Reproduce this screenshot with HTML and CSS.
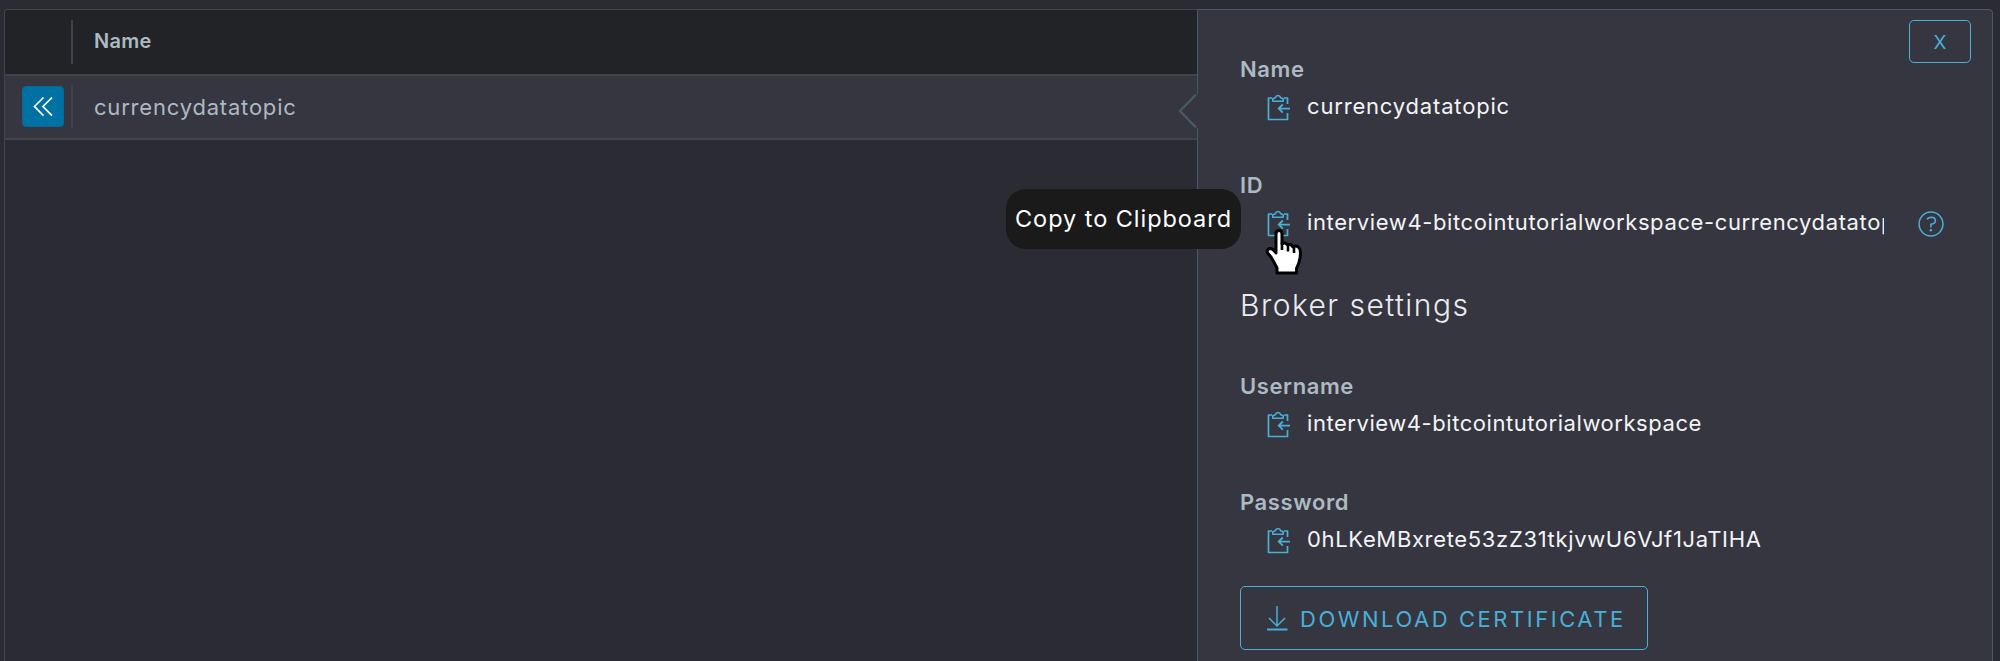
FILE: index.html
```html
<!DOCTYPE html>
<html lang="en">
<head>
<meta charset="utf-8">
<title>Topics</title>
<link rel="stylesheet" href="styles.css">
</head>
<body>
<svg class="defs" width="0" height="0">
  <symbol id="clip" viewBox="0 0 24 28">
    <path d="M5 4H1.500V25.500H20.500V19M20.500 10V4H17" fill="none" stroke="currentColor" stroke-width="1.700" stroke-linejoin="round"/>
    <path d="M5.800 7.200V4.800L8.300 3.800Q9 1.500 11 1.500T13.700 3.800L16.200 4.800V7.200Z" fill="none" stroke="currentColor" stroke-width="1.600" stroke-linejoin="round"/>
    <path d="M23 14.600H12M15.800 10.500L11.700 14.600L15.800 18.700" fill="none" stroke="currentColor" stroke-width="1.800"/>
  </symbol>
</svg>
<div class="datagrid">
  <section class="table">
    <div class="row head">
      <div class="cell action"></div>
      <div class="cell title">Name</div>
    </div>
    <div class="row selected">
      <div class="cell action">
        <button class="collapse"><svg width="20" height="22" viewBox="0 0 20 22"><path d="M10.500 1.500L1.500 10.500L10.500 19.700M19 1.500L10 10.500L19 19.700" fill="none" stroke="#fff" stroke-width="1.700"/></svg></button>
      </div>
      <div class="cell topic">currencydatatopic</div>
    </div>
  </section>
  <aside class="pane">
    <svg class="caret" width="20" height="36" viewBox="0 0 20 36"><path d="M18.500 1L20 1V35L18.500 35L1.500 18Z" fill="#363640"/><path d="M18 1.500L2 18L18 34.500" fill="none" stroke="#495964" stroke-width="2.400"/></svg>
    <button class="close">X</button>
    <div class="field">
      <div class="label">Name</div>
      <div class="value"><svg class="clip"><use href="#clip"/></svg><span class="text v-name">currencydatatopic</span></div>
    </div>
    <div class="field">
      <div class="label">ID</div>
      <div class="value"><svg class="clip"><use href="#clip"/></svg><span class="text v-id">interview4-bitcointutorialworkspace-currencydatatopic</span>
        <svg class="help" width="26" height="26" viewBox="0 0 26 26"><circle cx="13" cy="13" r="11.900" fill="none" stroke="currentColor" stroke-width="1.500"/><path d="M8.900 8.200Q10.800 6.200 13.300 6.200Q17.400 6.300 17.400 9.700Q17.300 12.700 12.900 13.200V16.500" fill="none" stroke="currentColor" stroke-width="1.500"/><circle cx="12.900" cy="19.300" r="1.200" fill="currentColor"/></svg>
      </div>
    </div>
    <h2 class="heading">Broker settings</h2>
    <div class="field">
      <div class="label">Username</div>
      <div class="value"><svg class="clip"><use href="#clip"/></svg><span class="text v-user">interview4-bitcointutorialworkspace</span></div>
    </div>
    <div class="field">
      <div class="label">Password</div>
      <div class="value"><svg class="clip"><use href="#clip"/></svg><span class="text v-pass">0hLKeMBxrete53zZ31tkjvwU6VJf1JaTIHA</span></div>
    </div>
    <button class="download"><svg width="22" height="26" viewBox="0 0 22 26"><path d="M11 0V20M3 12L11 20L19 12" fill="none" stroke="currentColor" stroke-width="1.500"/><path d="M1 23.500H21.500" stroke="currentColor" stroke-width="2"/></svg><span>DOWNLOAD CERTIFICATE</span></button>
    <div class="tooltip">Copy to Clipboard</div>
    <svg class="pointer" width="38" height="48" viewBox="0 0 38 48"><path d="M11 6Q11 2.500 14 2.500T17 6V16Q20 13.500 22.500 17Q25.500 15 28 19Q32 16.500 34.500 20.500Q36 23 35 30Q34 36 31.500 40.500V45H12V40Q9 34 6 29L2.500 25Q1.500 21 5 20.500Q8 20.500 11 25Z" fill="#fff" stroke="#000" stroke-width="3" stroke-linejoin="round"/><path d="M17 14V22M23 17V23.500M29 19V25" stroke="#000" stroke-width="2.600"/></svg>
  </aside>
</div>
</body>
</html>
```
FILE: styles.css
```css
* { box-sizing: border-box; }
body {
  margin: 0;
  height: 661px;
  overflow: hidden;
  padding: 9px 7px 0 4px;
  background: #2b2b34;
  font: 22px "Inter", "Liberation Sans", sans-serif;
  color: #acbac3;
}
.defs { position: absolute; }
button { font: inherit; background: none; padding: 0; }
.datagrid { display: flex; height: 670px; }
.table {
  flex: 1;
  border: 1px solid #44444f;
  border-right: 0;
  border-radius: 4px 0 0 0;
  overflow: hidden;
}
.row { display: flex; align-items: center; border-bottom: 2px solid #42424e; }
.head { height: 66px; background: #222327; }
.selected { height: 64px; background: #363640; }
.cell { height: 44px; display: flex; align-items: center; }
.action { width: 68px; border-right: 2px solid #42424e; padding-left: 17px; }
.title { padding: 0 0 2px 21px; font-size: 20px; font-weight: 600; letter-spacing: 0.3px; }
.topic { padding: 0 0 0 21px; letter-spacing: 0.8px; }
.collapse {
  width: 42px;
  height: 41px;
  margin-top: -1px;
  border: 1px solid #086993;
  border-radius: 4px;
  background: #0071a3;
  display: flex;
  align-items: center;
  justify-content: center;
}
.pane {
  position: relative;
  width: 796px;
  padding: 41px 50px 0 42px;
  background: #363640;
  border: 1px solid #495967;
  border-radius: 0 4px 0 0;
}
.caret { position: absolute; left: -20px; top: 83px; }
.close {
  position: absolute;
  right: 21px;
  top: 10px;
  width: 62px;
  height: 43px;
  border: 1px solid #49afd9;
  border-radius: 5px;
  color: #49afd9;
  font-size: 19px;
  padding-top: 2px;
}
.field { height: 74px; margin-bottom: 42px; }
.label { height: 37px; line-height: 37px; font-weight: 600; letter-spacing: 0.6px; }
.value { display: flex; height: 37px; line-height: 37px; color: #f2f4f6; }
.clip { width: 24px; height: 28px; margin: 6px 16px 0 27px; color: #49afd9; flex: none; }
.text { white-space: nowrap; overflow: hidden; }
.v-name { letter-spacing: 0.82px; }
.v-id { width: 577px; flex: none; letter-spacing: 0.61px; }
.v-user { letter-spacing: 0.55px; }
.v-pass { letter-spacing: 0.66px; }
.help { margin: 7px 0 0 34px; color: #49afd9; flex: none; }
.heading { margin: 44px 0 43px; height: 40px; line-height: 40px; font-size: 30px; font-weight: 300; color: #e9ecef; letter-spacing: 1.45px; }
.download {
  display: flex;
  align-items: center;
  width: 408px;
  height: 64px;
  margin-top: -14px;
  padding: 2px 0 0 25px;
  border: 1px solid #49afd9;
  border-radius: 5px;
  color: #49afd9;
  gap: 12px;
  white-space: nowrap;
  letter-spacing: 2.54px;
}
.tooltip {
  position: absolute;
  left: -192px;
  top: 179px;
  width: 235px;
  height: 60px;
  border-radius: 20px;
  background: #1a1a1a;
  color: #fff;
  font-size: 23.5px;
  letter-spacing: 0.95px;
  line-height: 59px;
  text-align: center;
  white-space: nowrap;
}
.pointer { position: absolute; left: 67px; top: 218px; }
```
